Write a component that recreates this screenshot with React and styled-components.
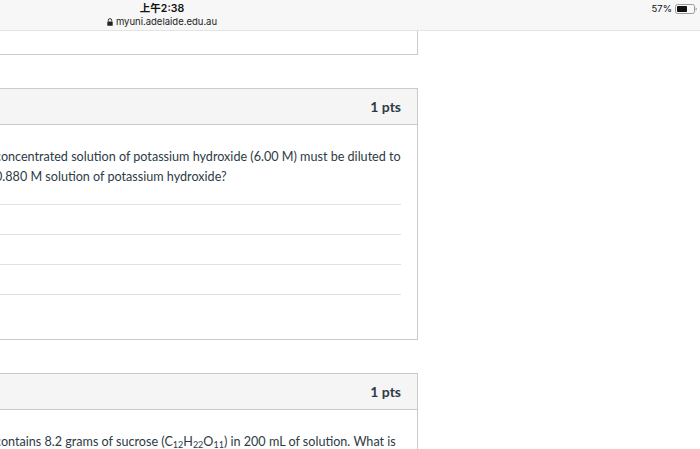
import React from "react";
import styled, { createGlobalStyle } from "styled-components";

const GlobalStyle = createGlobalStyle`
  html, body {
    margin: 0;
    padding: 0;
    background: #ffffff;
    overflow: hidden;
  }
  body {
    font-family: Lato, "Liberation Sans", sans-serif;
  }
`;

const Page = styled.div`
  width: 700px;
  height: 449px;
  overflow: hidden;
  display: flex;
  flex-direction: column;
`;

const StatusBar = styled.div`
  position: relative;
  height: 30px;
  flex-shrink: 0;
  background: #f7f7f7;
  border-bottom: 1px solid #e4e4e4;
  display: flex;
  flex-direction: column;
  align-items: center;
  width: 324px;
  padding-right: 376px;
  font-family: Inter, "Liberation Sans", "Noto Sans CJK SC", sans-serif;
  color: #111;
`;

const Time = styled.div`
  margin-top: 2px;
  font-size: 10.5px;
  font-weight: 600;
  line-height: 13px;
  font-family: Inter, "Noto Sans CJK SC", sans-serif;
`;

const Url = styled.div`
  display: flex;
  align-items: center;
  gap: 3px;
  font-size: 9.5px;
  line-height: 13px;
  color: #222;
`;

const Battery = styled.div`
  position: absolute;
  right: 3px;
  top: 2px;
  display: flex;
  align-items: center;
  gap: 3px;
  font-size: 9.5px;
  line-height: 13px;
`;

const Column = styled.div`
  margin-left: -30px;
  width: 448px;
  display: flex;
  flex-direction: column;
  gap: 33px;
`;

const CardTail = styled.div`
  height: 23px;
  border: 1px solid #c8cbce;
  border-top: none;
  background: #fff;
`;

const Card = styled.div`
  border: 1px solid #c8cbce;
  background: #fff;
`;

const Header = styled.div`
  height: 35px;
  background: #f5f5f5;
  border-bottom: 1px solid #c8cbce;
  display: flex;
  align-items: center;
  justify-content: flex-end;
  padding-right: 16px;
  font-size: 14px;
  font-weight: 700;
  color: #2d3b45;
`;

const Body = styled.div`
  padding: 22px 16px 15px 24px;
`;

const Question = styled.p`
  margin: 0 0 17px;
  font-size: 12.6px;
  line-height: 20px;
  color: #2d3b45;
  white-space: nowrap;

  sub {
    font-size: 9px;
    line-height: 0;
    vertical-align: -2px;
  }
`;

const Answer = styled.div`
  height: 29px;
  border-top: 1px solid #e2e2e2;
`;

const Lock = () => (
  <svg width="6" height="8" viewBox="0 0 6 8">
    <path d="M1.3 3.4V2.3a1.7 1.7 0 0 1 3.4 0v1.1" fill="none" stroke="#222" strokeWidth="0.9" />
    <rect x="0.3" y="3.4" width="5.4" height="4.4" rx="0.6" fill="#222" />
  </svg>
);

const BatteryIcon = () => (
  <svg width="22" height="10" viewBox="0 0 22 10">
    <rect x="0.5" y="0.5" width="19" height="9" rx="2" fill="none" stroke="#9a9a9a" />
    <rect x="2" y="2" width="10" height="6" rx="0.8" fill="#111" />
    <path d="M20.6 3.3v3.4c0.8-0.3 1.2-0.9 1.2-1.7s-0.4-1.4-1.2-1.7z" fill="#9a9a9a" />
  </svg>
);

const questions = [
  {
    id: 2,
    text: (
      <>
        concentrated solution of potassium hydroxide (6.00 M) must be diluted to
        <br />
        0.880 M solution of potassium hydroxide?
      </>
    ),
    answers: 4,
  },
  {
    id: 3,
    text: (
      <>
        contains 8.2 grams of sucrose (C<sub>12</sub>H<sub>22</sub>O<sub>11</sub>) in 200 mL of solution. What is
      </>
    ),
    answers: 0,
  },
];

export default function App() {
  return (
    <Page>
      <GlobalStyle />
      <StatusBar>
        <Time>上午2:38</Time>
        <Url>
          <Lock />
          myuni.adelaide.edu.au
        </Url>
        <Battery>
          57%
          <BatteryIcon />
        </Battery>
      </StatusBar>
      <Column>
        <CardTail />
        {questions.map((q) => (
          <Card key={q.id}>
            <Header>1 pts</Header>
            <Body>
              <Question>{q.text}</Question>
              {Array.from({ length: q.answers }).map((_, i) => (
                <Answer key={i} />
              ))}
            </Body>
          </Card>
        ))}
      </Column>
    </Page>
  );
}
